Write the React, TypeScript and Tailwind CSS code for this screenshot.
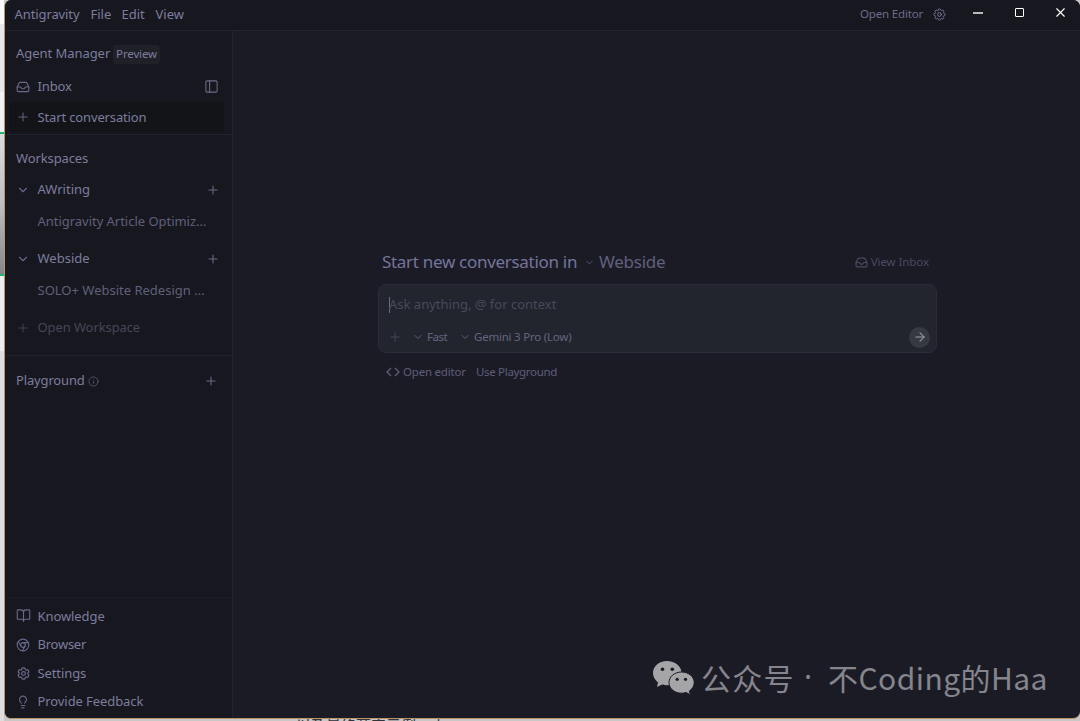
import React from 'react';
import {
  ArrowRight,
  BookOpen,
  ChevronDown,
  Chrome,
  Inbox,
  Info,
  Lightbulb,
  PanelLeft,
  Plus,
  X,
} from 'lucide-react';
import { HiOutlineCog6Tooth, HiOutlineCog8Tooth } from 'react-icons/hi2';

interface RowProps {
  icon?: React.ReactNode;
  label: string;
  className?: string;
  labelClass?: string;
  action?: React.ReactNode;
}

const Row: React.FC<RowProps> = ({ icon, label, className = '', labelClass = '', action }) => (
  <div className={`flex items-center pl-[11px] pr-[12px] ${className}`}>
    <span className="flex w-[21.5px] shrink-0 items-center text-[#68698a]">{icon}</span>
    <span className={`whitespace-nowrap ${labelClass}`}>{label}</span>
    {action && <span className="ml-auto flex text-[#6b6c87]">{action}</span>}
  </div>
);

const WeChatIcon = () => (
  <svg className="h-[36px] w-[43px]" viewBox="0 0 43 36">
    <path fill="#a5a5a8" d="M15 1C7 1 1 6.2 1 13c0 4 2 7 5 9.5l-1 4.5 5-2.5c2 .6 3.5.8 5 .8C23 25.3 29.5 20 29.5 13S23 1 15 1z" />
    <path fill="#a5a5a8" stroke="#1b1b26" strokeWidth="1" d="M29.5 12C22.5 12 17 16.6 17 22.6s5.5 10.6 12.5 10.6c1.5 0 3-.2 4.500-.7l4.500 2.200-1.200-3.700c3-2 4.900-5 4.900-8.400C42.200 16.600 36.500 12 29.500 12z" />
    <g fill="#1b1b26">
      <circle cx="10.500" cy="9.300" r="1.800" />
      <circle cx="20.300" cy="9.300" r="1.800" />
      <circle cx="25.200" cy="19.300" r="1.600" />
      <circle cx="33.500" cy="19.300" r="1.600" />
    </g>
  </svg>
);

const TitleBar = () => (
  <header className="flex h-[31px] shrink-0 items-center border-b border-[#22232d] bg-[#17171f] pb-[2px] pl-[9.5px] text-[13px] text-[#7c7d9e]">
    <nav className="mt-px flex">
      <span className="w-[76px] tracking-[-0.1px]">Antigravity</span>
      <span className="w-[31px]">File</span>
      <span className="w-[34px]">Edit</span>
      <span>View</span>
    </nav>
    <div className="ml-auto flex items-center">
      <span className="w-[72px] whitespace-nowrap text-[11.5px] tracking-[-0.17px] text-[#6b6c89]">Open Editor</span>
      <HiOutlineCog8Tooth className="h-[15px] w-[15px] text-[#7c7d9e]" />
      <span className="mb-[3px] ml-[26px] h-[2px] w-[10px] bg-[#b8b8bd]" />
      <span className="mb-[3px] ml-[32px] h-[9px] w-[9px] rounded-[1px] border border-white" />
      <X className="mb-[3px] ml-[29px] mr-[12px] h-[15px] w-[15px] text-white" strokeWidth={1.8} />
    </div>
  </header>
);

const Sidebar = () => (
  <aside className="flex w-[228px] shrink-0 flex-col border-r border-[#22232d] bg-[#17171f] text-[13px] text-[#7c7d9e]">
    <div className="flex h-[46px] items-center pl-[11px]">
      <span className="w-[97px] whitespace-nowrap tracking-[-0.05px]">Agent Manager</span>
      <span className="flex h-[19px] w-[47px] items-center justify-center rounded-[3px] bg-[#1f2028] text-[11.5px] tracking-[-0.15px]">Preview</span>
    </div>
    <Row
      className="h-[19px]"
      icon={<Inbox className="h-[14px] w-[14px]" strokeWidth={1.9} />}
      label="Inbox"
      labelClass="tracking-[-0.15px]"
      action={<PanelLeft className="mb-px mr-px h-[15px] w-[15px]" strokeWidth={1.7} />}
    />
    <div className="mt-[6px] h-[33px] border-b border-[#20212a]">
      <Row
        className="ml-[4px] mr-[8px] h-[30px] rounded-[4px] bg-[#131418] pl-[7px]!"
        icon={<Plus className="mb-px h-[14px] w-[14px]" strokeWidth={1.6} />}
        label="Start conversation"
        labelClass="pt-px tracking-[-0.14px]"
      />
    </div>
    <div className="flex h-[221px] flex-col border-b border-[#20212a]">
      <span className="mt-[13px] h-[20px] pl-[11px] leading-[20px] tracking-[-0.12px]">Workspaces</span>
      <Row
        className="mt-[12px] h-[20px]"
        icon={<ChevronDown className="h-[14px] w-[14px]" strokeWidth={1.9} />}
        label="AWriting"
        action={<Plus className="h-[14px] w-[14px]" strokeWidth={1.8} />}
      />
      <Row className="mt-[12px] h-[20px]" label="Antigravity Article Optimiz..." labelClass="text-[#5f607a] tracking-[-0.03px]" />
      <Row
        className="mt-[17px] h-[20px]"
        icon={<ChevronDown className="h-[14px] w-[14px]" strokeWidth={1.9} />}
        label="Webside"
        action={<Plus className="h-[14px] w-[14px]" strokeWidth={1.8} />}
      />
      <Row className="mt-[12px] h-[20px]" label="SOLO+ Website Redesign ..." labelClass="text-[#5f607a]" />
      <Row
        className="mt-[17px] h-[20px]"
        icon={<Plus className="mb-px h-[14px] w-[14px] text-[#454658]" strokeWidth={1.6} />}
        label="Open Workspace"
        labelClass="text-[#454658] tracking-[-0.1px]"
      />
    </div>
    <div className="flex flex-1 items-start pl-[11px] pr-[14px] pt-[15px]">
      <div className="flex h-[20px] w-full items-center">
        <span className="w-[72px] tracking-[-0.15px]">Playground</span>
        <Info className="h-[11px] w-[11px] text-[#5a5b74]" strokeWidth={1.8} />
        <Plus className="ml-auto h-[14px] w-[14px] text-[#6b6c87]" strokeWidth={1.8} />
      </div>
    </div>
    <div className="h-[121px] border-t border-[#1d1e27] pt-[4px]">
      <Row className="h-[28.6px]" icon={<BookOpen className="mb-px h-[15px] w-[15px]" strokeWidth={1.8} />} label="Knowledge" labelClass="tracking-[-0.08px]" />
      <Row className="h-[28.6px]" icon={<Chrome className="h-[14px] w-[14px]" strokeWidth={1.9} />} label="Browser" labelClass="tracking-[-0.25px]" />
      <Row className="h-[28.6px]" icon={<HiOutlineCog6Tooth className="-ml-[0.5px] h-[15px] w-[15px] stroke-[1.9]" />} label="Settings" labelClass="tracking-[-0.1px]" />
      <Row className="h-[28.6px]" icon={<Lightbulb className="h-[14px] w-[14px]" strokeWidth={1.9} />} label="Provide Feedback" labelClass="tracking-[-0.08px]" />
    </div>
  </aside>
);

const Composer = () => (
  <div className="ml-[145px] mt-[219px] w-[559px]">
    <div className="flex h-[24px] items-center pl-[4px]">
      <span className="w-[202px] whitespace-nowrap text-[17px] tracking-[-0.3px] text-[#74759a]">Start new conversation in</span>
      <ChevronDown className="h-[11px] w-[11px] text-[#55566e]" strokeWidth={2} />
      <span className="ml-[4px] text-[17px] tracking-[-0.25px] text-[#60617c]">Webside</span>
      <span className="ml-auto flex items-center gap-[3px] pr-[8px] text-[11.5px] tracking-[-0.07px] text-[#484a5f]">
        <Inbox className="h-[13px] w-[13px]" strokeWidth={2.2} />
        View Inbox
      </span>
    </div>
    <div className="mt-[10px] flex h-[69px] flex-col rounded-[8px] border border-[#2b2c38] bg-[#22242e] pl-[10px] pr-[6px] pt-[10px]">
      <div className="flex h-[20px] items-center text-[13px] text-[#484a5a]">
        <span className="mr-[-1px] h-[16px] w-px bg-[#696a88]" />
        <span>Ask anything, @ for context</span>
      </div>
      <div className="mt-[10px] flex h-[24px] items-center text-[11.5px] text-[#65667f]">
        <Plus className="mb-px ml-[-1px] h-[14px] w-[14px] text-[#484a5a]" strokeWidth={1.6} />
        <ChevronDown className="ml-[10px] mr-[3px] h-[12px] w-[12px]" strokeWidth={1.8} />
        <span className="w-[32px] tracking-[-0.5px]">Fast</span>
        <ChevronDown className="mr-[3px] h-[12px] w-[12px]" strokeWidth={1.8} />
        <span className="tracking-[-0.22px]">Gemini 3 Pro (Low)</span>
        <span className="ml-auto flex h-[21px] w-[21px] items-center justify-center rounded-full bg-[#363842] text-[#a0a1a8]">
          <ArrowRight className="h-[14px] w-[14px]" strokeWidth={1.8} />
        </span>
      </div>
    </div>
    <div className="mt-[9px] flex h-[20px] items-center pl-[8px] text-[11.5px] text-[#5d5e78]">
      <svg className="mr-[3px] h-[14px] w-[14px]" viewBox="0 0 14 14" fill="none" stroke="currentColor" strokeWidth="1.3">
        <path d="M5 3L1 7l4 4M9 3l4 4-4 4" />
      </svg>
      <span className="w-[73px] whitespace-nowrap tracking-[-0.21px]">Open editor</span>
      <span className="tracking-[-0.32px]">Use Playground</span>
    </div>
  </div>
);

const App: React.FC = () => {
  return (
    <div className="relative h-[721px] w-[1080px] overflow-hidden bg-[#c9c8c6] font-['Noto_Sans','Noto_Sans_CJK_SC',sans-serif]">
      {/* Slice of the document behind the window */}
      <div className="absolute left-0 top-0 flex h-full w-[4px] flex-col bg-[#dededf]">
        <span className="h-[24px] bg-[#fafafa]" />
        <span className="h-[68px] bg-[#e8e8e8]" />
        <span className="h-[40px] bg-[#f2f2f2]" />
        <span className="h-[2px] bg-[#20b76b]" />
        <span className="h-[140px] bg-linear-to-b from-[#dcdcdc] via-[#c0c0c0] to-[#858585]" />
        <span className="h-[2px] bg-[#20b76b]" />
        <span className="h-[75px] bg-[#ededed]" />
      </div>
      <div className="absolute left-[296px] top-[715px] whitespace-nowrap font-['Noto_Sans_CJK_SC',sans-serif] text-[15px] leading-[20px] text-[#30343b]">以及最终落实示例一去</div>

      <div className="relative ml-[4px] flex h-[719px] flex-col overflow-hidden rounded-[7px] border-b border-l border-[#b99468] bg-[#1b1b26]">
        <TitleBar />
        <div className="flex min-h-0 flex-1">
          <Sidebar />
          <main className="flex-1">
            <Composer />
          </main>
        </div>
      </div>

      <div className="absolute left-[652px] top-[659px] flex items-center text-[#85858b]">
        <WeChatIcon />
        <div className="mb-[2px] ml-[6px] flex whitespace-nowrap font-['Noto_Sans_CJK_SC',sans-serif] text-[30px] leading-[36px] tracking-[1.2px]">
          <span className="w-[103px]">公众号</span>
          <span className="w-[24px] font-['Noto_Sans',sans-serif]">·</span>
          <span className="tracking-[0.45px]">不Coding的Haa</span>
        </div>
      </div>
    </div>
  );
};

export default App;
